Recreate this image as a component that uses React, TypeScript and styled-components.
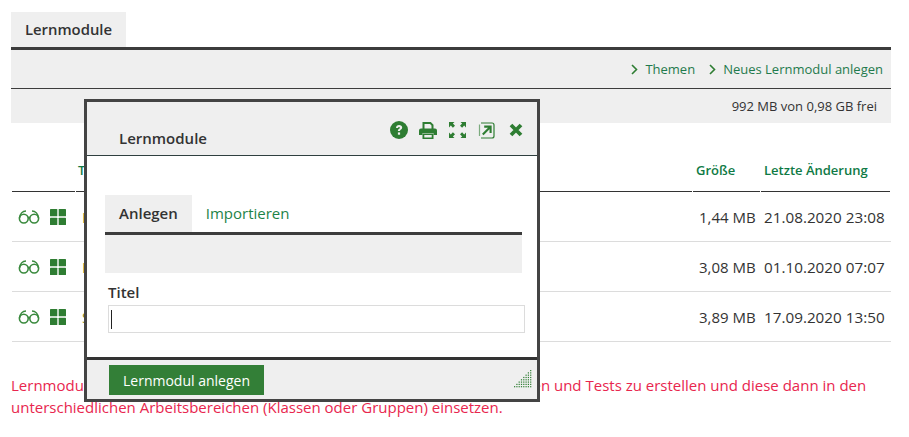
import { createGlobalStyle } from "styled-components";
import styled from "styled-components";

const GlobalStyle = createGlobalStyle`
  html, body {
    margin: 0;
    padding: 0;
    background: #fff;
  }
  body {
    font-family: "Open Sans", "Liberation Sans", sans-serif;
    font-size: 15px;
    color: #333;
  }
`;

const Page = styled.div`
  position: relative;
  width: 909px;
  height: 437px;
  overflow: hidden;
  padding: 12px 18px 0 11px;
  box-sizing: border-box;
`;

const TabBar = styled.div`
  display: flex;
  border-bottom: 3px solid #3c3c3c;
`;

const Tab = styled.div<{ $active?: boolean }>`
  height: 35px;
  line-height: 35px;
  padding: 0 14px;
  background: ${(p) => (p.$active ? "#efefef" : "transparent")};
  color: ${(p) => (p.$active ? "#333" : "#1d8348")};
  font-weight: ${(p) => (p.$active ? 600 : 400)};
  font-size: 14.85px;
`;

const Toolbar = styled.div`
  height: 38px;
  background: #efefef;
  border-bottom: 1px solid #3c3c3c;
  display: flex;
  justify-content: flex-end;
  align-items: center;
  gap: 14px;
  padding-right: 8px;
`;

const ToolLink = styled.a`
  display: flex;
  align-items: center;
  gap: 7px;
  color: #1f7a4d;
  font-size: 13px;
`;

const Status = styled.div`
  height: 34px;
  background: #efefef;
  display: flex;
  justify-content: flex-end;
  align-items: center;
  padding-right: 14px;
  font-size: 13px;
`;

const HeadRow = styled.div`
  display: grid;
  grid-template-columns: 63px 616px 67px 129px;
  gap: 1px;
  margin: 27px 0 0 1px;
`;

const HeadCell = styled.div`
  height: 41px;
  line-height: 41px;
  padding-left: 3px;
  border-bottom: 1px solid #333;
  color: #0f7a45;
  font-size: 13px;
  font-weight: 600;
  white-space: nowrap;
`;

const TitleHead = styled(HeadCell)`
  padding-left: 2px;
`;

const Row = styled.div`
  display: grid;
  grid-template-columns: 63px 616px 67px 129px;
  gap: 1px;
  margin-left: 1px;
  padding-top: 1px;
  height: 48px;
  border-bottom: 1px solid #dcdcdc;
  align-items: center;
  font-size: 15px;
`;

const Icons = styled.div`
  display: flex;
  align-items: center;
  gap: 10px;
  padding-left: 6px;
`;

const RowTitle = styled.span`
  color: #8a8a1e;
  padding-left: 6px;
`;

const SizeCell = styled.span`
  padding-left: 6px;
  white-space: nowrap;
`;

const DateCell = styled.span`
  padding-left: 3px;
  font-size: 15.25px;
  white-space: nowrap;
`;

const Notice = styled.p`
  margin: 32px 0 0;
  color: #e8264e;
  font-size: 15px;
  line-height: 22px;
  white-space: nowrap;
`;

const Modal = styled.div`
  position: absolute;
  left: 84px;
  top: 99px;
  width: 456px;
  height: 303px;
  box-sizing: border-box;
  border: 3px solid #444;
  background: #fff;
  display: flex;
  flex-direction: column;
`;

const ModalHead = styled.div`
  height: 54px;
  flex: none;
  background: #efefef;
  border-bottom: 1px solid #2f3f3f;
  display: flex;
  justify-content: space-between;
  box-sizing: border-box;
  padding: 0 14px 0 32px;
`;

const ModalTitle = styled.div`
  margin-top: 26px;
  font-weight: 600;
  font-size: 15px;
  line-height: 20px;
`;

const ModalIcons = styled.div`
  display: flex;
  align-items: center;
  gap: 11px;
  height: 56px;
`;

const ModalBody = styled.div`
  flex: 1;
  padding: 39px 15px 0 18px;
`;

const ModalTabs = styled.div`
  display: flex;
  border-bottom: 3px solid #3c3c3c;
`;

const InnerTab = styled(Tab)`
  height: 37px;
  line-height: 37px;
  font-size: 15px;
`;

const ModalBar = styled.div`
  height: 38px;
  background: #efefef;
`;

const Label = styled.label`
  display: block;
  margin: 9px 0 3px 3px;
  font-weight: 600;
  font-size: 15px;
  line-height: 20px;
`;

const TextField = styled.div`
  width: 417px;
  height: 28px;
  margin-left: 3px;
  box-sizing: border-box;
  border: 1px solid #dcdcdc;
  padding: 4px 0 0 2px;
`;

const Caret = styled.div`
  width: 1px;
  height: 19px;
  background: #222;
`;

const ModalFoot = styled.div`
  position: relative;
  height: 42px;
  flex: none;
  background: #efefef;
  border-top: 3px solid #333;
  box-sizing: border-box;
  padding: 5px 0 0 22px;
`;

const PrimaryButton = styled.button`
  height: 30px;
  width: 155px;
  border: 0;
  padding: 0;
  background: #337f37;
  color: #fff;
  font: 400 14px "Open Sans", "Liberation Sans", sans-serif;
`;

const ResizeGrip = styled.svg`
  position: absolute;
  right: 5px;
  bottom: 11px;
`;

const green = "#2e7d32";

function Chevron() {
  return (
    <svg width="7" height="11" viewBox="0 0 7 11" fill="none">
      <path d="M1 1l4.5 4.5L1 10" stroke={green} strokeWidth="1.6" />
    </svg>
  );
}

function Glasses() {
  return (
    <svg width="22" height="14" viewBox="0 0 22 14" fill="none" stroke="#3a8a3e" strokeWidth="1.6">
      <circle cx="5.8" cy="8.6" r="4.400" />
      <circle cx="16.200" cy="8.6" r="4.400" />
      <path d="M10.100 7.800c.6-.5 1.200-.5 1.800 0M1.500 8C2 4 4.500 1 8 1M20.500 8C20 4 17.500 1 14 1" />
    </svg>
  );
}

function Tiles() {
  return (
    <svg width="16" height="16" viewBox="0 0 16 16" fill={green}>
      <rect width="7.3" height="7.3" rx="0.6" />
      <rect x="8.7" width="7.3" height="7.3" rx="0.6" />
      <rect y="8.7" width="7.3" height="7.3" rx="0.6" />
      <rect x="8.7" y="8.7" width="7.3" height="7.3" rx="0.6" />
    </svg>
  );
}

function HelpIcon() {
  return (
    <svg width="18" height="18" viewBox="0 0 18 18">
      <circle cx="9" cy="9" r="9" fill={green} />
      <path d="M6 7c0-1.800 1.300-2.900 3.100-2.900 1.800 0 3.100 1 3.100 2.500 0 2.100-2.200 2-2.200 3.500H7.900c0-2.400 2-2.300 2-3.400 0-.5-.4-.8-.9-.8-.6 0-.9.4-1 1.100z" fill="#efefef" />
      <rect x="7.900" y="11.400" width="2.200" height="2.300" fill="#efefef" />
    </svg>
  );
}

function PrintIcon() {
  return (
    <svg width="19" height="17" viewBox="0 0 19 17" fill={green}>
      <path d="M3.500 0h8.300L14.500 2.700V7h-2V3.500L11 2H5.500v5h-2z" />
      <path d="M2 6.500h14a2 2 0 0 1 2 2V13h-3.500v-2h-11v2H0V8.500a2 2 0 0 1 2-2z" />
      <path d="M3.500 11.500h11V17h-11zM5.300 13v2.500h7.400V13z" fillRule="evenodd" />
    </svg>
  );
}

function ExpandIcon() {
  return (
    <svg width="18" height="16" viewBox="0 0 18 16" fill={green}>
      <path d="M0 0h5.500L3.900 1.600 6 3.700 3.900 5.800 1.800 3.600 0 5.500z" />
      <path d="M17 0v5.500l-1.800-1.900L13.100 5.800 11 3.700l2.100-2.100L11.500 0z" />
      <path d="M0 16v-5.500l1.800 1.900 2.100-2.200L6 12.300l-2.100 2.100L5.500 16z" />
      <path d="M17 16h-5.500l1.600-1.600L11 12.300l2.100-2.100 2.100 2.200 1.800-1.900z" />
    </svg>
  );
}

function PopoutIcon() {
  return (
    <svg width="20" height="17" viewBox="0 0 20 17" fill="none" stroke={green}>
      <path d="M3 1H14a2 2 0 0 1 2 2V14a2 2 0 0 1-2 2H3" strokeWidth="1.200" />
      <path d="M1.500 2.500V14" strokeWidth="1.200" opacity="0.6" />
      <path d="M4.800 12.500L12 5.300M6.200 4.600h6.400V11" strokeWidth="2.100" />
    </svg>
  );
}

function CloseIcon() {
  return (
    <svg width="14" height="14" viewBox="0 0 14 14" stroke={green} strokeWidth="3.800">
      <path d="M2 2l10 10M12 2L2 12" />
    </svg>
  );
}

function Grip() {
  const dots = [];
  for (let r = 0; r < 8; r++) {
    for (let c = 7 - r; c < 8; c++) {
      dots.push(<rect key={`${r}-${c}`} x={c * 2.3} y={r * 2.3} width="1.200" height="1.200" fill={green} />);
    }
  }
  return (
    <ResizeGrip width="18" height="18" viewBox="0 0 18 18">
      {dots}
    </ResizeGrip>
  );
}

const rows = [
  { title: "Lernmodul 1", size: "1,44 MB", date: "21.08.2020 23:08" },
  { title: "Lernmodul 2", size: "3,08 MB", date: "01.10.2020 07:07" },
  { title: "Sprachmodul", size: "3,89 MB", date: "17.09.2020 13:50" },
];

export default function App() {
  return (
    <Page>
      <GlobalStyle />
      <TabBar>
        <Tab $active>Lernmodule</Tab>
      </TabBar>
      <Toolbar>
        <ToolLink>
          <Chevron /> Themen
        </ToolLink>
        <ToolLink>
          <Chevron /> Neues Lernmodul anlegen
        </ToolLink>
      </Toolbar>
      <Status>992 MB von 0,98 GB frei</Status>
      <HeadRow>
        <HeadCell />
        <TitleHead>Titel</TitleHead>
        <HeadCell>Größe</HeadCell>
        <HeadCell>Letzte Änderung</HeadCell>
      </HeadRow>
      {rows.map((row) => (
        <Row key={row.date}>
          <Icons>
            <Glasses />
            <Tiles />
          </Icons>
          <RowTitle>{row.title}</RowTitle>
          <SizeCell>{row.size}</SizeCell>
          <DateCell>{row.date}</DateCell>
        </Row>
      ))}
      <Notice>
        Lernmodule geben Ihnen die Möglichkeit, eigene Inhalte, Aufgaben, Übungen und Tests zu erstellen und diese dann in den
        <br />
        unterschiedlichen Arbeitsbereichen (Klassen oder Gruppen) einsetzen.
      </Notice>

      <Modal>
        <ModalHead>
          <ModalTitle>Lernmodule</ModalTitle>
          <ModalIcons>
            <HelpIcon />
            <PrintIcon />
            <ExpandIcon />
            <PopoutIcon />
            <CloseIcon />
          </ModalIcons>
        </ModalHead>
        <ModalBody>
          <ModalTabs>
            <InnerTab $active>Anlegen</InnerTab>
            <InnerTab>Importieren</InnerTab>
          </ModalTabs>
          <ModalBar />
          <Label>Titel</Label>
          <TextField>
            <Caret />
          </TextField>
        </ModalBody>
        <ModalFoot>
          <PrimaryButton>Lernmodul anlegen</PrimaryButton>
          <Grip />
        </ModalFoot>
      </Modal>
    </Page>
  );
}
